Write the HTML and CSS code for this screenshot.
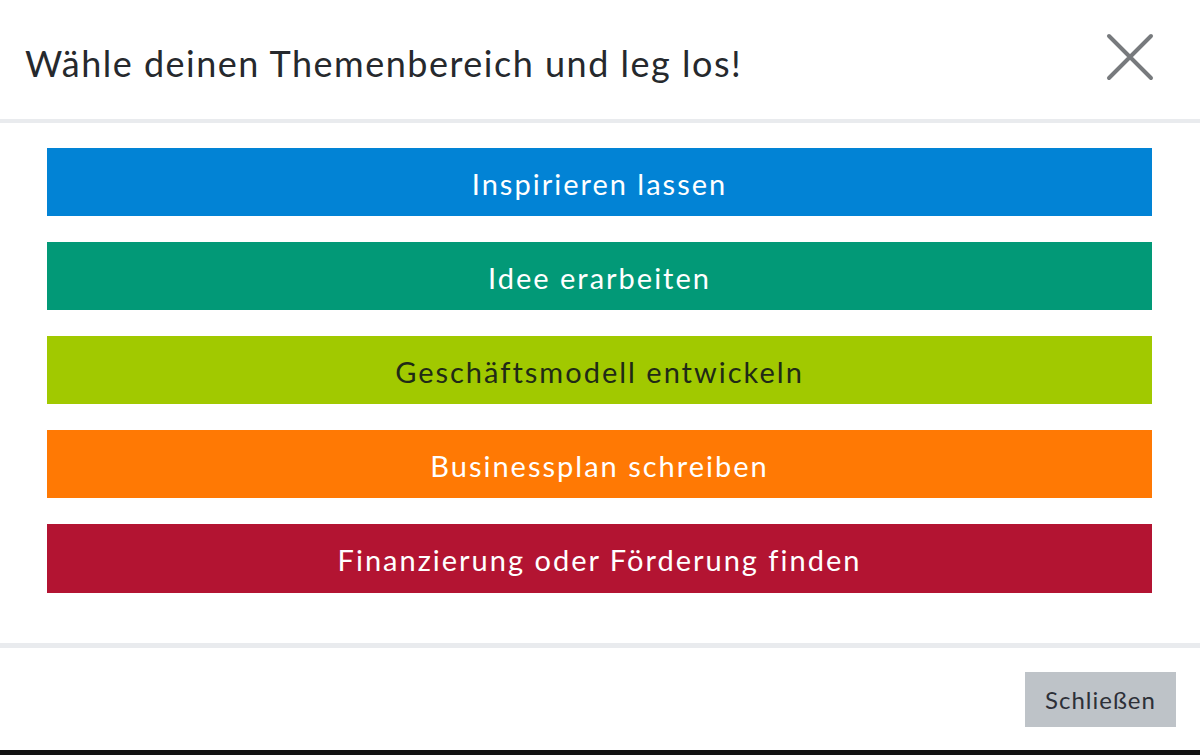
FILE: index.html
```html
<!DOCTYPE html>
<html lang="de">
<head>
<meta charset="utf-8">
<title>Themenbereich</title>
<link rel="stylesheet" href="styles.css">
</head>
<body>
<div class="modal">
  <header class="modal-header">
    <h1 class="modal-title">Wähle deinen Themenbereich und leg los!</h1>
    <button class="close" aria-label="Schließen">
      <svg width="50" height="50" viewBox="0 0 50 50"><path d="M4 4 L46 46 M46 4 L4 46" stroke="#777a7d" stroke-width="4" stroke-linecap="round" fill="none"/></svg>
    </button>
  </header>
  <main class="modal-body">
    <a class="topic topic-blue">Inspirieren lassen</a>
    <a class="topic topic-green">Idee erarbeiten</a>
    <a class="topic topic-lime">Geschäftsmodell entwickeln</a>
    <a class="topic topic-orange">Businessplan schreiben</a>
    <a class="topic topic-red">Finanzierung oder Förderung finden</a>
  </main>
  <footer class="modal-footer">
    <button class="btn-close">Schließen</button>
  </footer>
</div>
<div class="backdrop-strip"></div>
</body>
</html>
```
FILE: styles.css
```css
* { box-sizing: border-box; }
html, body { margin: 0; padding: 0; }
body {
  width: 1200px;
  height: 755px;
  overflow: hidden;
  background: #ffffff;
  font-family: Lato, "Noto Sans", sans-serif;
  color: #25282c;
}
.modal {
  display: flex;
  flex-direction: column;
  height: 750px;
}
.modal-header {
  height: 123px;
  border-bottom: 4px solid #e9ebee;
  display: flex;
  align-items: center;
  justify-content: space-between;
  padding: 0 45px 6px 25px;
}
.modal-title {
  margin: 12px 0 0;
  font-weight: 400;
  font-size: 36px;
  letter-spacing: 1.5px;
  color: #26292d;
}
.close {
  border: 0;
  background: none;
  padding: 0;
  width: 50px;
  height: 50px;
  display: flex;
}
.modal-body {
  display: flex;
  flex-direction: column;
  gap: 26px;
  padding: 25px 48px 50px 47px;
  border-bottom: 5px solid #e9ebee;
}
.topic {
  height: 68px;
  display: flex;
  align-items: center;
  justify-content: center;
  font-size: 29px;
  letter-spacing: 2px;
  color: #ffffff;
  padding-top: 2px;
}
.topic-blue { background: #0283d5; }
.topic-green { background: #029977; }
.topic-lime { background: #a1c900; color: #1f2a16; }
.topic-orange { background: #ff7904; }
.topic-red { background: #b31432; height: 69px; }
.modal-footer {
  flex: 1;
  display: flex;
  justify-content: flex-end;
  align-items: flex-start;
  padding: 24px 24px 0 0;
}
.btn-close {
  width: 151px;
  height: 55px;
  border: 0;
  background: #bec3c8;
  font-family: Lato, "Noto Sans", sans-serif;
  font-size: 24px;
  color: #2d3038;
  letter-spacing: 1px;
}
.backdrop-strip {
  height: 5px;
  background: #121212;
}
```
